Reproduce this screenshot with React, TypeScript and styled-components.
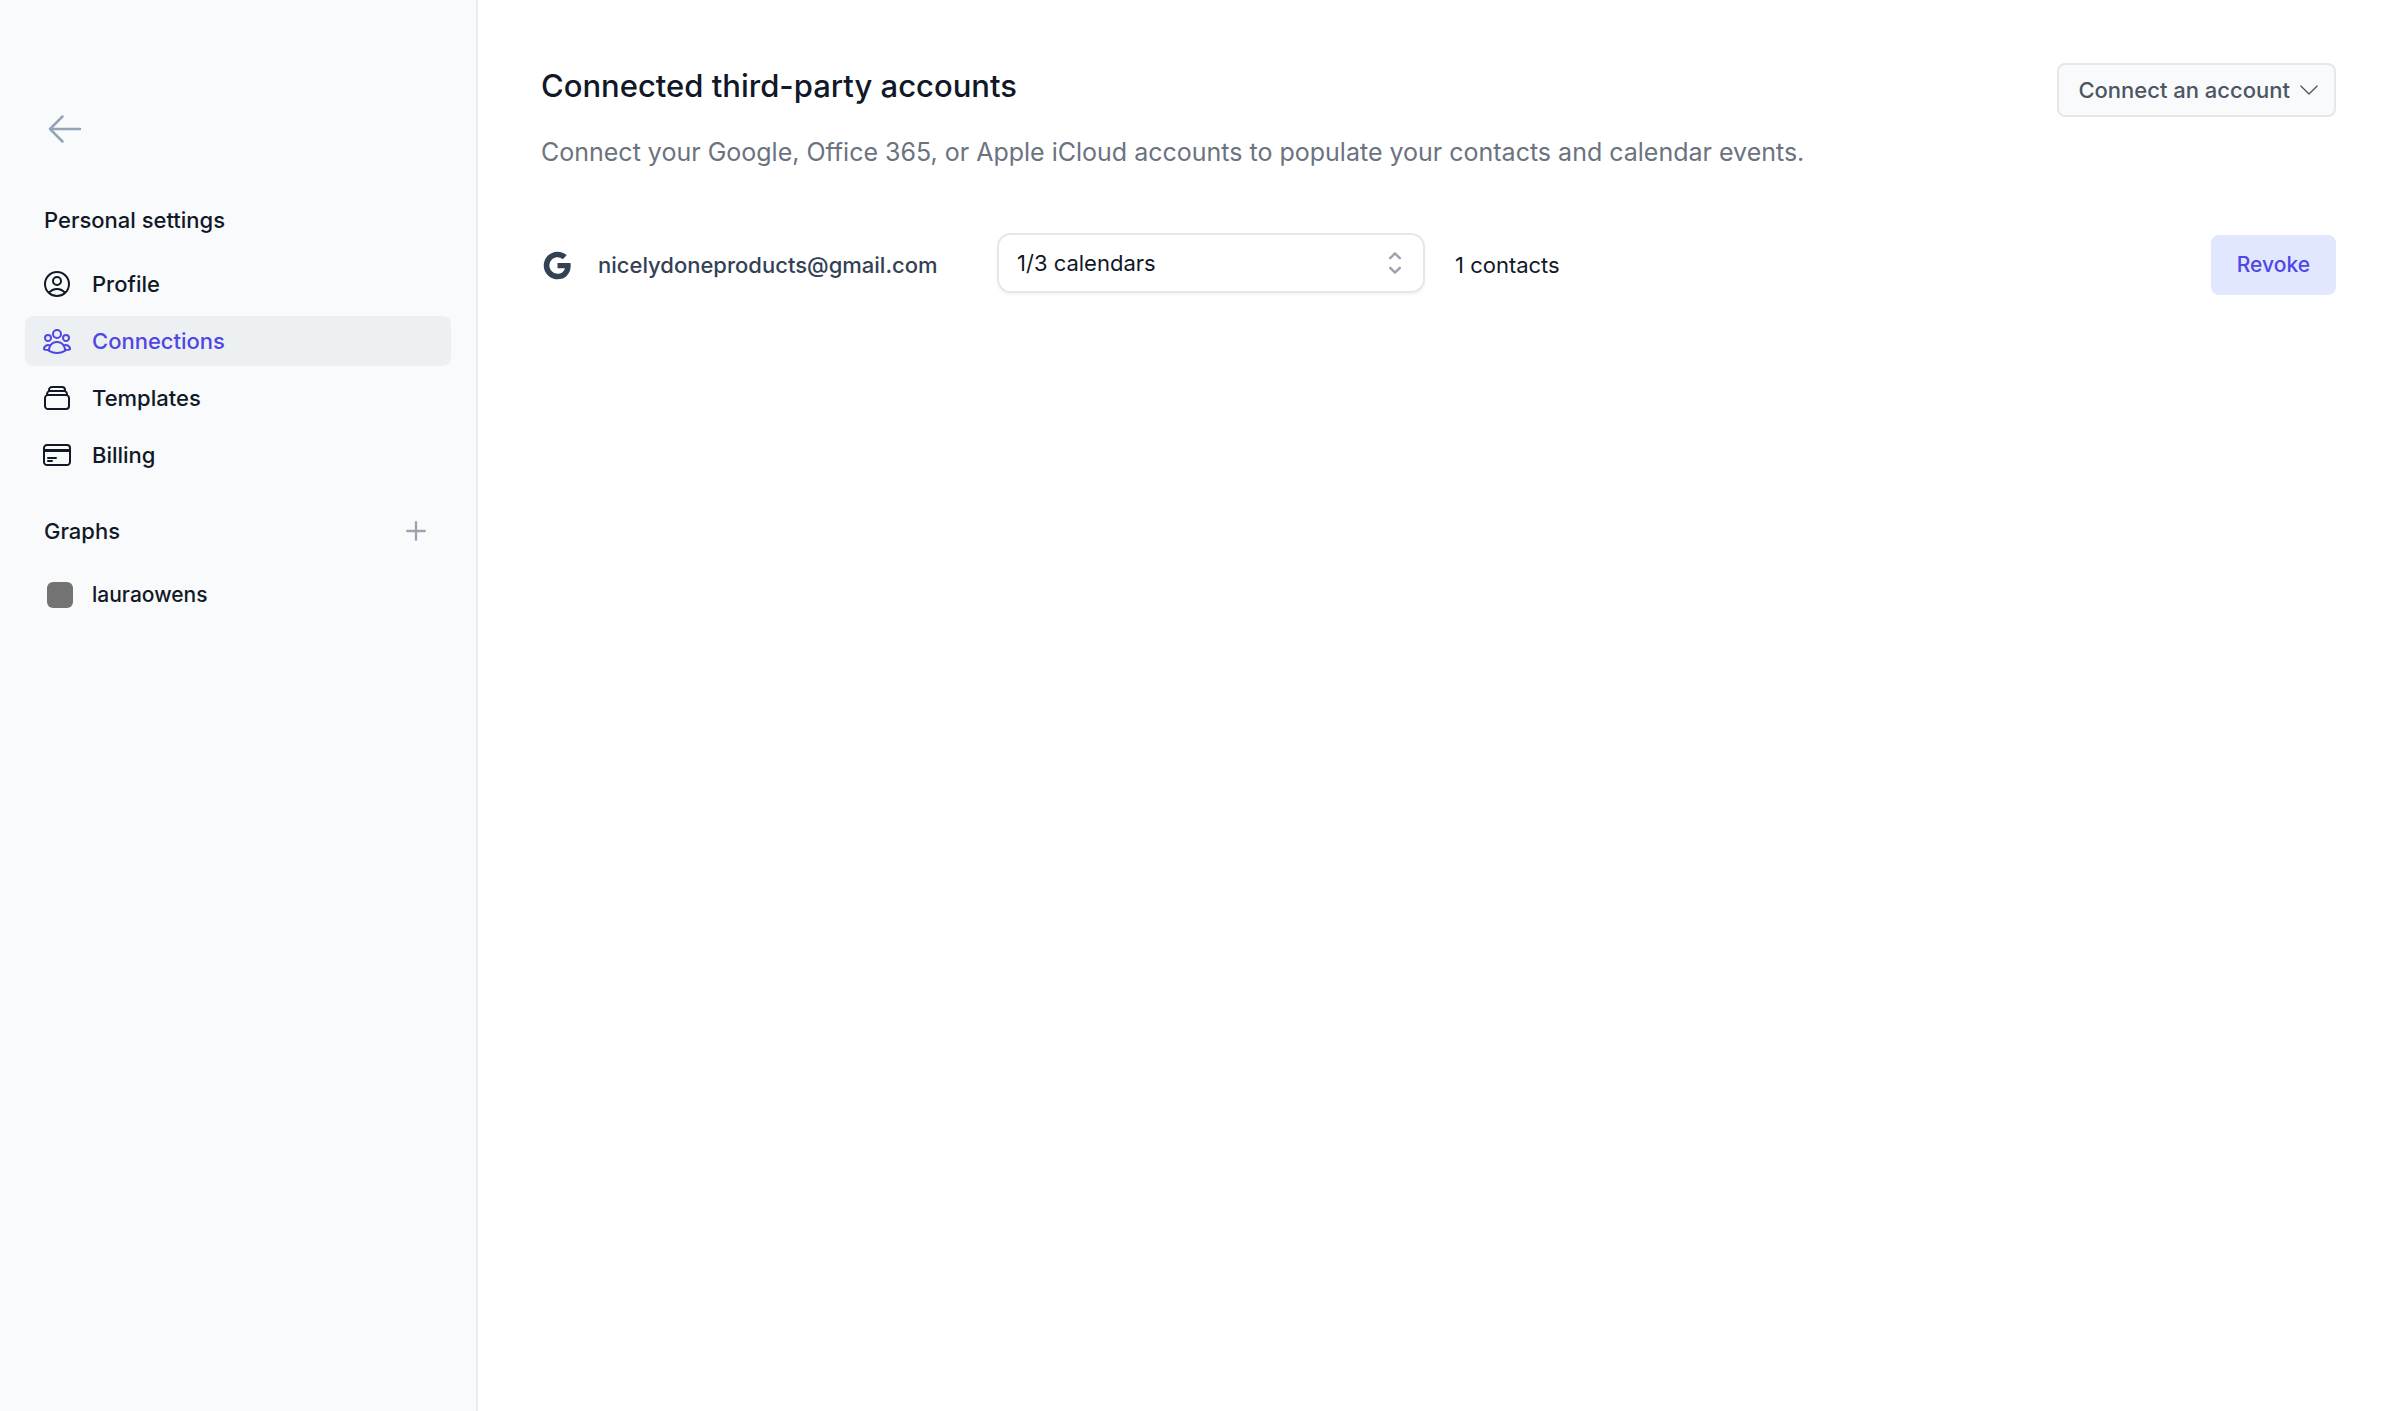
import React from 'react';
import styled, { createGlobalStyle } from 'styled-components';
import {
  HiOutlineArrowLeft,
  HiOutlineCreditCard,
  HiOutlinePlus,
  HiOutlineRectangleStack,
  HiOutlineUserCircle,
  HiOutlineUserGroup,
} from 'react-icons/hi2';
import { RiGoogleFill } from 'react-icons/ri';
import type { IconType } from 'react-icons';

const GlobalStyle = createGlobalStyle`
  *, *::before, *::after { box-sizing: border-box; }
  body {
    margin: 0;
    background: #ffffff;
    color: #111827;
    font-family: Inter, "Liberation Sans", sans-serif;
    font-size: 22px;
    line-height: 32px;
    -webkit-font-smoothing: antialiased;
  }
  button, select { font: inherit; color: inherit; cursor: pointer; }
  h1, h2, p, ul { margin: 0; padding: 0; }
  ul { list-style: none; }
  svg { display: block; flex: none; }
`;

const Layout = styled.div`
  display: flex;
  min-height: 100vh;
`;

const Sidebar = styled.aside`
  flex: none;
  width: 478px;
  padding: 104px 25px 32px;
  background: #f9fafb;
  border-right: 2px solid #e9ebee;
`;

const IconButton = styled.button`
  display: flex;
  align-items: center;
  justify-content: center;
  padding: 0;
  border: 0;
  background: none;
  color: #9ca3af;
`;

const BackButton = styled(IconButton)`
  width: 50px;
  height: 50px;
  margin: 0 15px;
  color: #94a3b8;
  font-size: 40px;
`;

const AddButton = styled(IconButton)`
  width: 32px;
  height: 32px;
  font-size: 28px;

  svg {
    stroke-width: 2;
  }
`;

const Section = styled.section<{ $top: number }>`
  margin-top: ${(p) => p.$top}px;
`;

const SectionHeader = styled.div`
  display: flex;
  align-items: center;
  justify-content: space-between;
  padding: 0 19px;
`;

const SectionTitle = styled.h2`
  font-size: 22px;
  line-height: 32px;
  font-weight: 500;
`;

const NavList = styled.ul`
  display: flex;
  flex-direction: column;
  gap: 7px;
  margin-top: 23px;
`;

const NavLink = styled.a<{ $active?: boolean }>`
  display: flex;
  align-items: center;
  gap: 19px;
  height: 50px;
  padding: 0 16px;
  border-radius: 8px;
  background: ${(p) => (p.$active ? '#edf0f3' : 'transparent')};
  color: ${(p) => (p.$active ? '#4f46e5' : '#111827')};
  font-weight: 500;
  text-decoration: none;
`;

const NavIcon = styled.span`
  font-size: 32px;
`;

const GraphLink = styled(NavLink)`
  font-size: 21px;
`;

const Swatch = styled.span`
  width: 26px;
  height: 26px;
  margin-left: 6px;
  border-radius: 6px;
  background: #737373;
`;

const Main = styled.main`
  flex: 1;
  min-width: 0;
  padding: 63px 64px 63px 63px;
`;

const PageHeader = styled.header`
  display: flex;
  align-items: flex-start;
  justify-content: space-between;
  gap: 32px;
`;

const PageTitle = styled.h1`
  font-size: 31px;
  line-height: 46px;
  font-weight: 500;
`;

const Description = styled.p`
  margin-top: 23px;
  color: #6b7280;
  font-size: 25px;
  line-height: 40px;
`;

const ConnectButton = styled.button`
  display: flex;
  flex: none;
  align-items: center;
  gap: 6px;
  height: 54px;
  padding: 0 12px 0 19px;
  border: 2px solid #e5e7eb;
  border-radius: 8px;
  background: #f9fafb;
  color: #4b5563;
  font-weight: 500;
`;

const AccountRow = styled.li`
  display: grid;
  grid-template-columns: 33px 423px 428px 1fr auto;
  align-items: center;
  min-height: 64px;
  margin-top: 61px;
`;

const Provider = styled.span`
  color: #334155;
  font-size: 33px;
`;

const Email = styled.span`
  padding-left: 24px;
  color: #334155;
  font-weight: 500;
`;

const SelectBox = styled.div`
  position: relative;
  align-self: start;
  color: #9ca3af;
`;

const CalendarSelect = styled.select`
  display: block;
  width: 100%;
  height: 60px;
  padding: 0 64px 0 18px;
  border: 2px solid #e5e7eb;
  border-radius: 14px;
  background: #ffffff;
  box-shadow: 0 2px 3px rgba(0, 0, 0, 0.05);
  color: #111827;
  appearance: none;
`;

const SelectArrows = styled.svg`
  position: absolute;
  top: 14px;
  right: 14px;
  width: 32px;
  height: 32px;
  pointer-events: none;
`;

const Contacts = styled.span`
  padding-left: 30px;
`;

const RevokeButton = styled.button`
  height: 60px;
  padding: 0 26px;
  border: 0;
  border-radius: 8px;
  background: #e0e7ff;
  color: #4f46e5;
  font-size: 21px;
  font-weight: 500;
`;

type NavItem = { label: string; icon: IconType; active?: boolean };

const navItems: NavItem[] = [
  { label: 'Profile', icon: HiOutlineUserCircle },
  { label: 'Connections', icon: HiOutlineUserGroup, active: true },
  { label: 'Templates', icon: HiOutlineRectangleStack },
  { label: 'Billing', icon: HiOutlineCreditCard },
];

export default function App() {
  return (
    <>
      <GlobalStyle />
      <Layout>
        <Sidebar>
          <BackButton type="button" aria-label="Back">
            <HiOutlineArrowLeft />
          </BackButton>
          <Section $top={50}>
            <SectionHeader>
              <SectionTitle>Personal settings</SectionTitle>
            </SectionHeader>
            <NavList>
              {navItems.map(({ label, icon: Icon, active }) => (
                <li key={label}>
                  <NavLink href="#" $active={active} aria-current={active ? 'page' : undefined}>
                    <NavIcon>
                      <Icon />
                    </NavIcon>
                    {label}
                  </NavLink>
                </li>
              ))}
            </NavList>
          </Section>
          <Section $top={35}>
            <SectionHeader>
              <SectionTitle>Graphs</SectionTitle>
              <AddButton type="button" aria-label="Add graph">
                <HiOutlinePlus />
              </AddButton>
            </SectionHeader>
            <NavList>
              <li>
                <GraphLink href="#">
                  <Swatch />
                  lauraowens
                </GraphLink>
              </li>
            </NavList>
          </Section>
        </Sidebar>
        <Main>
          <PageHeader>
            <div>
              <PageTitle>Connected third-party accounts</PageTitle>
              <Description>
                Connect your Google, Office 365, or Apple iCloud accounts to populate your contacts
                and calendar events.
              </Description>
            </div>
            <ConnectButton type="button">
              Connect an account
              <svg width="26" height="26" viewBox="0 0 24 24" fill="none" stroke="currentColor" strokeWidth="1.2" strokeLinecap="round" strokeLinejoin="round" aria-hidden="true">
                <path d="M19.5 8.25l-7.5 7.5-7.5-7.5" />
              </svg>
            </ConnectButton>
          </PageHeader>
          <ul>
            <AccountRow>
              <Provider>
                <RiGoogleFill />
              </Provider>
              <Email>nicelydoneproducts@gmail.com</Email>
              <SelectBox>
                <CalendarSelect aria-label="Calendars">
                  <option>1/3 calendars</option>
                </CalendarSelect>
                <SelectArrows viewBox="0 0 20 20" fill="none" stroke="currentColor" strokeWidth="1.5" strokeLinecap="round" strokeLinejoin="round" aria-hidden="true">
                  <path d="M7 7l3-3 3 3m0 6l-3 3-3-3" />
                </SelectArrows>
              </SelectBox>
              <Contacts>1 contacts</Contacts>
              <RevokeButton type="button">Revoke</RevokeButton>
            </AccountRow>
          </ul>
        </Main>
      </Layout>
    </>
  );
}
